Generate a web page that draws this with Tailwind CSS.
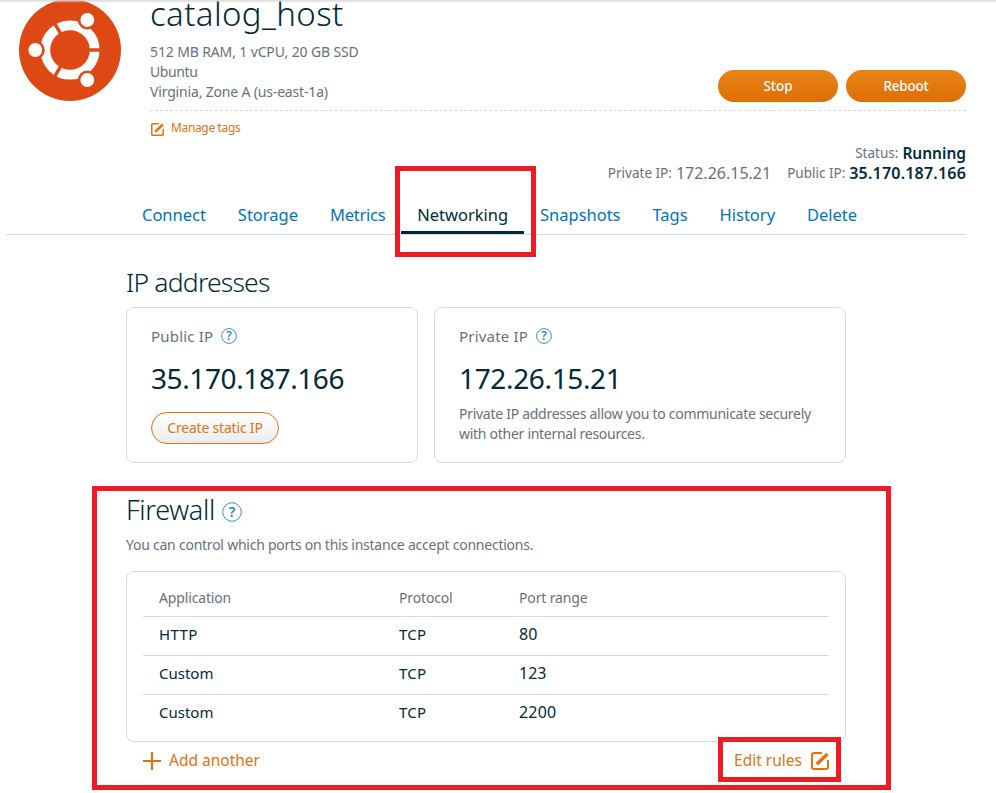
<!DOCTYPE html>
<html lang="en"><head><meta charset="utf-8"><title>catalog_host</title>
<script src="https://cdn.jsdelivr.net/npm/@tailwindcss/browser@4"></script></head>
<body class="bg-white">
<div class="relative w-[996px] h-[793px] overflow-hidden bg-white font-['Noto_Sans',sans-serif] text-[14px] leading-5 text-[#687078] whitespace-nowrap">
  <header class="flex h-[110px] pl-[19px]">
    <svg class="-mt-px size-[102px] shrink-0" viewBox="0 0 102 102">
      <circle cx="51" cy="51" r="51" fill="#dd4814"/>
      <circle cx="51" cy="51" r="24.7" fill="none" stroke="#fff" stroke-width="9.8"/>
      <path d="M51 51H84M51 51L34.5 22.4M51 51L34.5 79.6" stroke="#dd4814" stroke-width="3.4"/>
      <g fill="#fff" stroke="#dd4814" stroke-width="2.6"><circle cx="16.3" cy="51" r="8.2"/><circle cx="68.3" cy="21" r="8.2"/><circle cx="68.3" cy="81" r="8.2"/></g>
    </svg>
    <div class="ml-[29px] flex h-[111px] w-[816px] items-end justify-between border-b border-dashed border-[#d5dbdb]">
      <div class="h-[111px]">
        <h1 class="h-[43px] text-[33px] leading-[30px] font-light tracking-[0.4px] text-[#002b36]">catalog_host</h1>
        <p class="tracking-[-0.13px]">512 MB RAM, 1 vCPU, 20 GB SSD</p>
        <p class="tracking-[-0.4px]">Ubuntu</p>
        <p class="tracking-[-0.17px]">Virginia, Zone A (us-east-1a)</p>
      </div>
      <div class="mb-2 flex gap-2 text-[13.5px] font-medium text-white">
        <button class="h-8 w-[120px] rounded-full bg-linear-to-b from-[#e88516] to-[#df6d05]">Stop</button>
        <button class="h-8 w-[120px] rounded-full bg-linear-to-b from-[#e88516] to-[#df6d05] tracking-[-0.2px]">Reboot</button>
      </div>
    </div>
  </header>
  <div class="mt-[7px] ml-[151px] flex h-[26px] items-start text-[12px] tracking-[-0.35px] text-[#e07214]">
    <svg class="mt-[6px] mr-[7px] size-[13px]" viewBox="0 0 18 18" fill="none" stroke="#e07214" stroke-width="2.2"><path d="M11 1H3Q1 1 1 3V15Q1 17 3 17H15Q17 17 17 15V8"/><path d="M5.7 12.3L16.5 2" stroke-width="3.6"/></svg>
    <span class="mt-px">Manage tags</span>
  </div>
  <div class="flex w-[966px] flex-col items-end text-[13.5px]">
    <div class="flex gap-1"><span>Status:</span><b class="text-[15.5px] font-semibold text-[#002b36]">Running</b></div>
    <div class="flex gap-4">
      <div class="flex gap-1"><span>Private IP:</span><span class="text-[16px]">172.26.15.21</span></div>
      <div class="flex gap-1"><span>Public IP:</span><b class="text-[16px] font-semibold tracking-[0.2px] text-[#002b36]">35.170.187.166</b></div>
    </div>
  </div>
  <nav class="ml-[6px] flex h-[52px] w-[960px] items-end border-b border-[#d5dbdb] pl-[120px] text-[16.5px] tracking-[-0.02px] text-[#0073bb]">
    <a class="h-[34px] px-4 leading-[30px]">Connect</a>
    <a class="h-[34px] px-4 leading-[30px]">Storage</a>
    <a class="h-[34px] px-4 leading-[30px] tracking-[-0.25px]">Metrics</a>
    <a class="h-[34px] border-b-3 border-[#002b36] px-4 leading-[30px] text-[#002b36]">Networking</a>
    <a class="h-[34px] px-4 leading-[30px]">Snapshots</a>
    <a class="h-[34px] px-4 leading-[30px]">Tags</a>
    <a class="h-[34px] px-4 leading-[30px]">History</a>
    <a class="h-[34px] px-4 leading-[30px]">Delete</a>
  </nav>
  <main class="ml-[126px] w-[720px]">
    <h2 class="pt-[27px] text-[26.5px] leading-10 font-light tracking-[-0.8px] text-[#002b36]">IP addresses</h2>
    <div class="mt-[5px] flex gap-4">
      <section class="h-[156px] w-[292px] rounded-lg border border-[#d5dbdb] px-6 pt-[18px]">
        <div class="flex items-center gap-2 text-[15px] tracking-[0.2px]"><span>Public IP</span><svg class="size-4" viewBox="0 0 16 16"><circle cx="8" cy="8" r="7.4" fill="none" stroke="#3092cc"/><text x="8" y="12.2" text-anchor="middle" font-size="12" font-weight="600" fill="#1f88c9">?</text></svg></div>
        <div class="mt-3 text-[28px] leading-10 tracking-[-0.4px] text-[#002b36]">35.170.187.166</div>
        <button class="mt-[14px] h-8 w-32 rounded-full border border-[#e07214] bg-linear-to-b from-white to-[#eaeded] tracking-[-0.2px] text-[#e07214]">Create static IP</button>
      </section>
      <section class="h-[156px] w-[412px] rounded-lg border border-[#d5dbdb] px-6 pt-[18px]">
        <div class="flex items-center gap-2 text-[15px] tracking-[0.2px]"><span>Private IP</span><svg class="size-4" viewBox="0 0 16 16"><circle cx="8" cy="8" r="7.4" fill="none" stroke="#3092cc"/><text x="8" y="12.2" text-anchor="middle" font-size="12" font-weight="600" fill="#1f88c9">?</text></svg></div>
        <div class="mt-3 text-[28px] leading-10 tracking-[-0.35px] text-[#002b36]">172.26.15.21</div>
        <p class="mt-[6px] tracking-[-0.28px]">Private IP addresses allow you to communicate securely<br>with other internal resources.</p>
      </section>
    </div>
    <h2 class="mt-[27px] flex h-10 items-center gap-[7px] text-[27px] leading-10 font-light tracking-[-0.3px] text-[#002b36]"><span>Firewall</span><svg class="mt-1 size-5" viewBox="0 0 20 20"><circle cx="10" cy="10" r="9.3" fill="none" stroke="#3092cc"/><text x="10" y="15" text-anchor="middle" font-size="14.5" font-weight="600" fill="#1f88c9">?</text></svg></h2>
    <p class="mt-[5px] tracking-[-0.24px]">You can control which ports on this instance accept connections.</p>
    <section class="mt-4 h-[171px] rounded-lg border border-[#d5dbdb] px-4 pt-4 text-[15px] text-[#002b36]">
      <div class="grid h-[29px] grid-cols-[240px_120px_1fr] border-b border-[#d5dbdb] pl-4 text-[14px] tracking-[-0.15px] text-[#687078]"><span>Application</span><span>Protocol</span><span>Port range</span></div>
      <div class="grid h-[39px] grid-cols-[240px_120px_1fr] items-center border-b border-[#d5dbdb] pb-[5px] pl-4"><span class="tracking-[0.4px]">HTTP</span><span class="tracking-[0.3px]">TCP</span><span class="text-[16px]">80</span></div>
      <div class="grid h-[39px] grid-cols-[240px_120px_1fr] items-center border-b border-[#d5dbdb] pb-[5px] pl-4"><span>Custom</span><span class="tracking-[0.3px]">TCP</span><span class="text-[16px]">123</span></div>
      <div class="grid h-[38px] grid-cols-[240px_120px_1fr] items-center pb-[5px] pl-4"><span>Custom</span><span class="tracking-[0.3px]">TCP</span><span class="text-[16px] tracking-[0.2px]">2200</span></div>
    </section>
    <div class="flex h-9 items-center justify-between px-[17px] text-[15.5px] text-[#e07214]">
      <div class="flex items-center gap-2"><svg class="mt-0.5 size-[18px]" viewBox="0 0 18 18"><path d="M0 9H18M9 0V18" stroke="#e07214" stroke-width="2.2"/></svg><span>Add another</span></div>
      <div class="flex items-center gap-[9px]"><span>Edit rules</span><svg class="mt-0.5 size-[18px]" viewBox="0 0 18 18" fill="none" stroke="#e07214" stroke-width="2"><path d="M11 1H3Q1 1 1 3V15Q1 17 3 17H15Q17 17 17 15V8"/><path d="M5.7 12.3L16.5 2" stroke-width="3.4"/></svg></div>
    </div>
  </main>
  <div class="absolute top-0 left-0 h-[3px] w-full bg-linear-to-b from-[#d8d8d8] to-transparent"></div>
  <div class="absolute top-[166px] left-[395px] h-[91px] w-[141px] border-5 border-[#ed1c24]"></div>
  <div class="absolute top-[486px] left-[92px] h-[304px] w-[799px] border-5 border-[#ed1c24]"></div>
  <div class="absolute top-[737px] left-[718px] h-[45px] w-[123px] border-5 border-[#ed1c24]"></div>
</div>
</body></html>
